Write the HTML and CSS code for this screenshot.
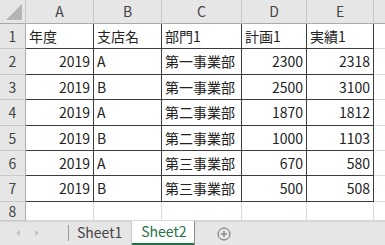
FILE: index.html
```html
<!DOCTYPE html>
<html lang="ja">
<head>
    <meta charset="UTF-8">
    <meta name="viewport" content="width=device-width, initial-scale=1.0">
    <title>Sheet2</title>
    <link rel="stylesheet" href="styles.css">
</head>
<body>
    <div class="sheet">
        <div class="grid">
            <div class="corner"><span class="corner-mark"></span></div>
            <div class="col-head">A</div>
            <div class="col-head">B</div>
            <div class="col-head">C</div>
            <div class="col-head">D</div>
            <div class="col-head">E</div>
            <div class="col-head last"></div>

            <div class="row-head">1</div>
            <div class="cell data">年度</div>
            <div class="cell data">支店名</div>
            <div class="cell data">部門1</div>
            <div class="cell data">計画1</div>
            <div class="cell data">実績1</div>
            <div class="cell"></div>

            <div class="row-head">2</div>
            <div class="cell data num">2019</div>
            <div class="cell data">A</div>
            <div class="cell data">第一事業部</div>
            <div class="cell data num">2300</div>
            <div class="cell data num">2318</div>
            <div class="cell"></div>

            <div class="row-head">3</div>
            <div class="cell data num">2019</div>
            <div class="cell data">B</div>
            <div class="cell data">第一事業部</div>
            <div class="cell data num">2500</div>
            <div class="cell data num">3100</div>
            <div class="cell"></div>

            <div class="row-head">4</div>
            <div class="cell data num">2019</div>
            <div class="cell data">A</div>
            <div class="cell data">第二事業部</div>
            <div class="cell data num">1870</div>
            <div class="cell data num">1812</div>
            <div class="cell"></div>

            <div class="row-head">5</div>
            <div class="cell data num">2019</div>
            <div class="cell data">B</div>
            <div class="cell data">第二事業部</div>
            <div class="cell data num">1000</div>
            <div class="cell data num">1103</div>
            <div class="cell"></div>

            <div class="row-head">6</div>
            <div class="cell data num">2019</div>
            <div class="cell data">A</div>
            <div class="cell data">第三事業部</div>
            <div class="cell data num">670</div>
            <div class="cell data num">580</div>
            <div class="cell"></div>

            <div class="row-head">7</div>
            <div class="cell data num">2019</div>
            <div class="cell data">B</div>
            <div class="cell data">第三事業部</div>
            <div class="cell data num">500</div>
            <div class="cell data num">508</div>
            <div class="cell"></div>

            <div class="row-head short">8</div>
            <div class="cell"></div>
            <div class="cell"></div>
            <div class="cell"></div>
            <div class="cell"></div>
            <div class="cell"></div>
            <div class="cell"></div>
        </div>
    </div>

    <div class="tab-bar">
        <div class="tab-nav">
            <span class="arrow left"></span>
            <span class="arrow right"></span>
        </div>
        <div class="tab">Sheet1</div>
        <div class="tab active">Sheet2</div>
        <div class="add-sheet">
            <svg width="14" height="14" viewBox="0 0 14 14">
                <circle cx="7" cy="7" r="6" fill="none" stroke="#6b6b6b" stroke-width="1"/>
                <path d="M7 3.8V10.2M3.8 7H10.2" stroke="#6b6b6b" stroke-width="1"/>
            </svg>
        </div>
    </div>
</body>
</html>
```

FILE: styles.css
```css
body {
    margin: 0;
    width: 385px;
    height: 245px;
    overflow: hidden;
    display: flex;
    flex-direction: column;
    background: #ffffff;
    font-family: "Noto Sans CJK JP", "Noto Sans", sans-serif;
    font-size: 14px;
    color: #222;
}
.sheet {
    flex: 1;
    overflow: hidden;
}
.grid {
    height: 100%;
    display: grid;
    grid-template-columns: 26px 68px 68px 80px 65px 67px 40px;
    grid-template-rows: 24px repeat(7, 25.4px) 1fr;
}
.grid > div {
    box-sizing: border-box;
    line-height: 23px;
    white-space: nowrap;
    overflow: hidden;
}
.corner {
    position: relative;
    background: #e6e6e6;
    border-right: 1px solid #c8c8c8;
    border-bottom: 1px solid #ababab;
}
.corner-mark {
    position: absolute;
    right: 3px;
    bottom: 3px;
    width: 0;
    height: 0;
    border-left: 16px solid transparent;
    border-bottom: 16px solid #b5b5b5;
}
.col-head {
    background: #e6e6e6;
    color: #444;
    text-align: center;
    border-right: 1px solid #c8c8c8;
    border-bottom: 1px solid #ababab;
}
.col-head.last {
    border-right: none;
}
.row-head {
    background: #e6e6e6;
    color: #444;
    text-align: center;
    border-right: 1px solid #ababab;
    border-bottom: 1px solid #c8c8c8;
    line-height: 24px !important;
}
.row-head.short {
    line-height: 19px !important;
}
.cell {
    border-right: 1px solid #dadada;
    border-bottom: 1px solid #dadada;
    padding: 0 3px;
    line-height: 24px !important;
}
.cell.data {
    border-right-color: #3c3c3c;
    border-bottom-color: #3c3c3c;
}
.cell.num {
    text-align: right;
}
.tab-bar {
    height: 23px;
    flex-shrink: 0;
    display: flex;
    align-items: stretch;
    background: #e6e6e6;
    border-top: 1px solid #d4d4d4;
    font-size: 14px;
    color: #444;
}
.tab-nav {
    width: 69px;
    display: flex;
    align-items: center;
    gap: 15px;
    padding-left: 16px;
    box-sizing: border-box;
    border-right: 1px solid #9a9a9a;
    margin: 3px 0 4px;
}
.arrow {
    width: 0;
    height: 0;
    border-top: 3px solid transparent;
    border-bottom: 3px solid transparent;
}
.arrow.left {
    border-right: 4px solid #c4c4c4;
}
.arrow.right {
    border-left: 4px solid #c4c4c4;
}
.tab {
    padding: 0 9px 0 8px;
    line-height: 21px;
}
.tab.active {
    box-sizing: border-box;
    width: 64px;
    background: #ffffff;
    color: #1f7145;
    padding: 0 0 0 9px;
    margin-top: -1px;
    border-left: 1px solid #c8c8c8;
    border-right: 1px solid #8c8c8c;
    box-shadow: inset 0 -2px 0 #1f7145;
}
.add-sheet {
    display: flex;
    align-items: center;
    padding-left: 22px;
}
```
